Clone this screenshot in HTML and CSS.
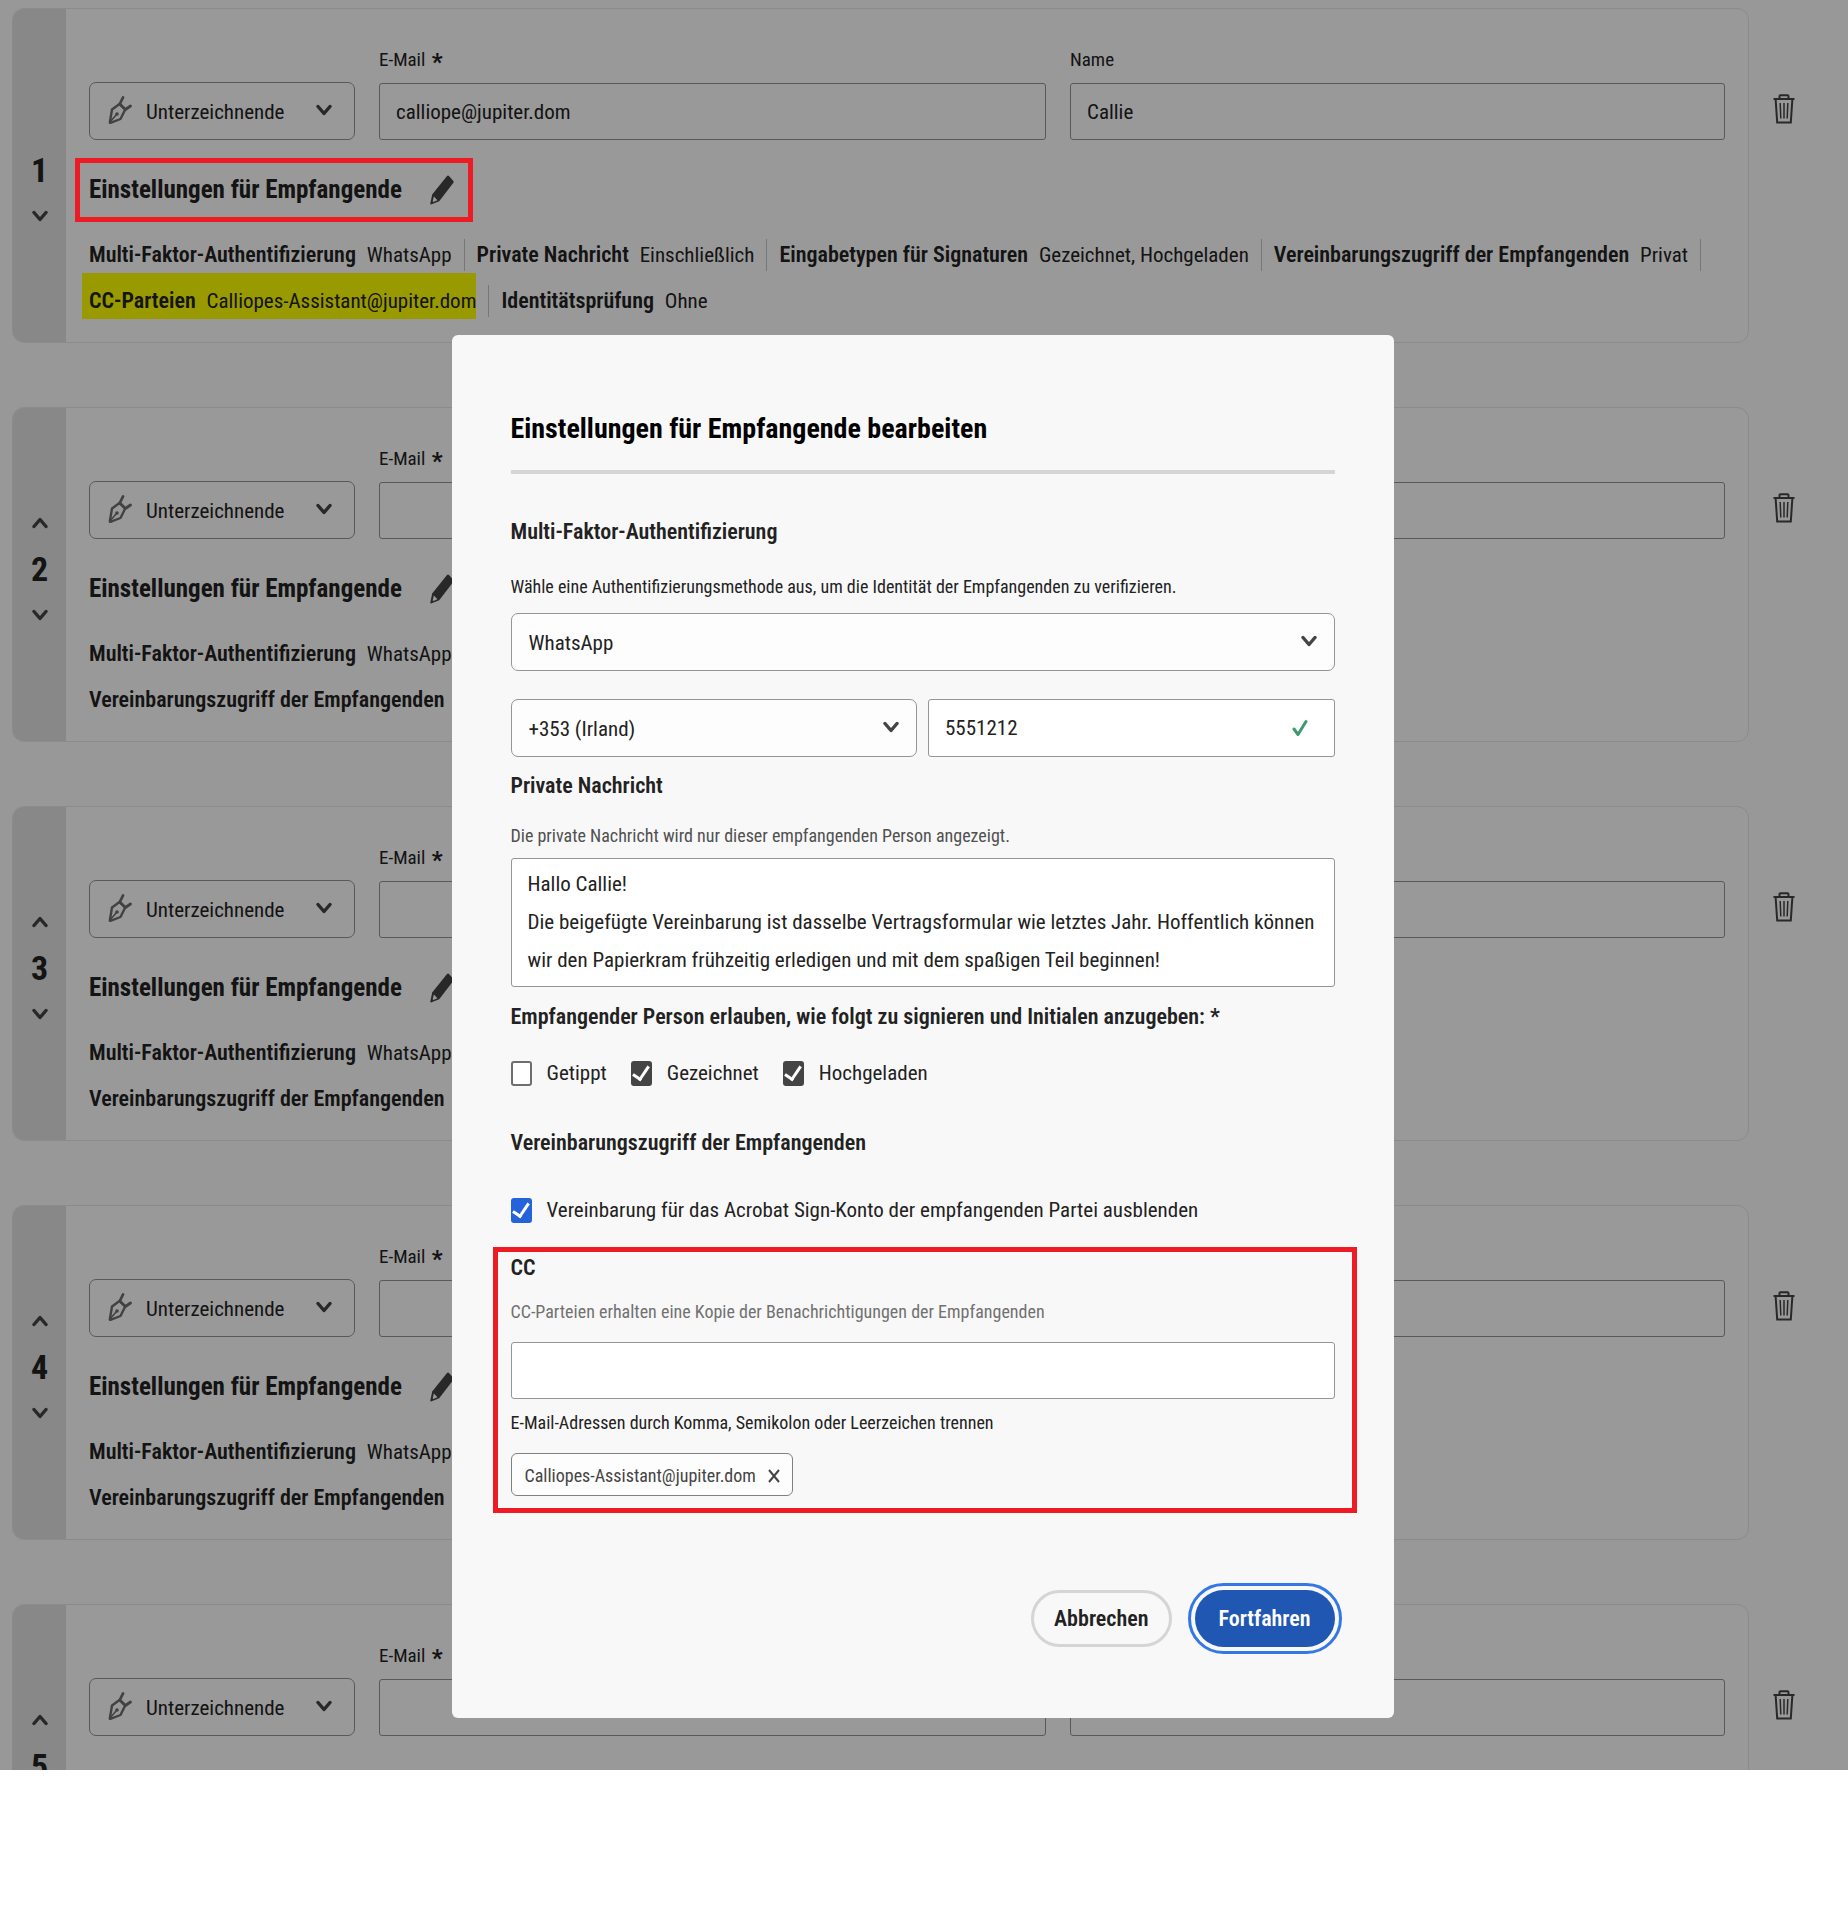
FILE: index.html
```
<!DOCTYPE html>
<html lang="de">
<head>
<meta charset="utf-8">
<meta name="viewport" content="width=device-width, initial-scale=1">
<title>Einstellungen für Empfangende bearbeiten</title>
<link rel="stylesheet" href="styles.css">
</head>
<body>

<svg class="sprite" aria-hidden="true">
  <symbol id="chevron" viewBox="0 0 16 12">
    <path d="M2 2.5 L8 9.5 L14 2.5" fill="none" stroke="currentColor" stroke-width="3.4" stroke-linecap="round" stroke-linejoin="round"/>
  </symbol>
  <symbol id="nib" viewBox="0 0 24 28">
    <path d="M11.5 8 L4 13.5 L1.8 26.5 Q1.8 27 2.4 26.8 L12.5 23 L17.2 13.5 Z" fill="none" stroke="currentColor" stroke-width="2.4" stroke-linejoin="round"/>
    <path d="M15 1.5 L11.8 8 L17.4 13.5 L22.5 10" fill="none" stroke="currentColor" stroke-width="2.8" stroke-linecap="round" stroke-linejoin="round"/>
    <path d="M2 26 L8.5 18.5" stroke="currentColor" stroke-width="1.6"/>
    <circle cx="9" cy="18" r="1.8" fill="currentColor"/>
  </symbol>
  <symbol id="pencil" viewBox="0 0 24 30">
    <path d="M17 0.9 Q18 0 19 0.9 L23.4 6 Q24 6.9 23.4 7.8 L9.2 26.2 L1 29.6 Q0.2 29.6 0.3 28.6 L2.2 19.4 Z" fill="currentColor"/>
    <path class="pencil-tip" d="M3.9 21.4 L7.4 25.2 L3.4 27 L2.7 26.3 Z"/>
  </symbol>
  <symbol id="trash" viewBox="0 0 22 30">
    <path d="M0.5 5 H21.5 M6.5 4.5 V2.2 Q6.5 1.2 7.5 1.2 H14.5 Q15.5 1.2 15.5 2.2 V4.5 M2.6 5 L4.2 28.6 H17.8 L19.4 5" fill="none" stroke="currentColor" stroke-width="2"/>
    <path d="M7.2 9 L7.8 24.5 M11 9 V24.5 M14.8 9 L14.2 24.5" fill="none" stroke="currentColor" stroke-width="1.5"/>
  </symbol>
  <symbol id="check" viewBox="0 0 16 18">
    <path d="M2 10 L6 15.5 L14 2.5" fill="none" stroke="currentColor" stroke-width="3" stroke-linecap="round" stroke-linejoin="round"/>
  </symbol>
</svg>

<div class="screen">
  <main class="recipients">

    <div class="recipient">
      <section class="card">
        <div class="order">
          <span class="order-number">1</span>
          <button class="move down" aria-label="Nach unten"><svg><use href="#chevron"/></svg></button>
        </div>
        <div class="card-body">
          <div class="fields">
            <div class="picker role">
              <svg class="nib"><use href="#nib"/></svg>
              <select aria-label="Rolle"><option>Unterzeichnende</option></select>
              <svg class="chevron"><use href="#chevron"/></svg>
            </div>
            <div class="field">
              <label for="email1">E-Mail <b>*</b></label>
              <input type="text" id="email1" value="calliope@jupiter.dom">
            </div>
            <div class="field">
              <label for="name1">Name</label>
              <input type="text" id="name1" value="Callie">
            </div>
          </div>
          <div class="settings marked">
            <h2>Einstellungen für Empfangende</h2>
            <button class="edit" aria-label="Bearbeiten"><svg><use href="#pencil"/></svg></button>
          </div>
          <div class="summary">
            <p><span><b>Multi-Faktor-Authentifizierung</b> WhatsApp</span></p>
            <p><span><b>Private Nachricht</b> Einschließlich</span></p>
            <p><span><b>Eingabetypen für Signaturen</b> Gezeichnet, Hochgeladen</span></p>
            <p><span><b>Vereinbarungszugriff der Empfangenden</b> Privat</span></p>
            <p><span class="highlight"><b>CC-Parteien</b> Calliopes-Assistant@jupiter.dom</span></p>
            <p><span><b>Identitätsprüfung</b> Ohne</span></p>
          </div>
        </div>
      </section>
      <button class="delete" aria-label="Löschen"><svg><use href="#trash"/></svg></button>
    </div>

    <div class="recipient">
      <section class="card">
        <div class="order">
          <button class="move up" aria-label="Nach oben"><svg><use href="#chevron"/></svg></button>
          <span class="order-number">2</span>
          <button class="move down" aria-label="Nach unten"><svg><use href="#chevron"/></svg></button>
        </div>
        <div class="card-body">
          <div class="fields">
            <div class="picker role">
              <svg class="nib"><use href="#nib"/></svg>
              <select aria-label="Rolle"><option>Unterzeichnende</option></select>
              <svg class="chevron"><use href="#chevron"/></svg>
            </div>
            <div class="field">
              <label for="email2">E-Mail <b>*</b></label>
              <input type="text" id="email2">
            </div>
            <div class="field">
              <input type="text" aria-label="Name">
            </div>
          </div>
          <div class="settings">
            <h2>Einstellungen für Empfangende</h2>
            <button class="edit" aria-label="Bearbeiten"><svg><use href="#pencil"/></svg></button>
          </div>
          <div class="summary stacked">
            <p><span><b>Multi-Faktor-Authentifizierung</b> WhatsApp</span></p>
            <p><span><b>Vereinbarungszugriff der Empfangenden</b></span></p>
          </div>
        </div>
      </section>
      <button class="delete" aria-label="Löschen"><svg><use href="#trash"/></svg></button>
    </div>

    <div class="recipient">
      <section class="card">
        <div class="order">
          <button class="move up" aria-label="Nach oben"><svg><use href="#chevron"/></svg></button>
          <span class="order-number">3</span>
          <button class="move down" aria-label="Nach unten"><svg><use href="#chevron"/></svg></button>
        </div>
        <div class="card-body">
          <div class="fields">
            <div class="picker role">
              <svg class="nib"><use href="#nib"/></svg>
              <select aria-label="Rolle"><option>Unterzeichnende</option></select>
              <svg class="chevron"><use href="#chevron"/></svg>
            </div>
            <div class="field">
              <label for="email3">E-Mail <b>*</b></label>
              <input type="text" id="email3">
            </div>
            <div class="field">
              <input type="text" aria-label="Name">
            </div>
          </div>
          <div class="settings">
            <h2>Einstellungen für Empfangende</h2>
            <button class="edit" aria-label="Bearbeiten"><svg><use href="#pencil"/></svg></button>
          </div>
          <div class="summary stacked">
            <p><span><b>Multi-Faktor-Authentifizierung</b> WhatsApp</span></p>
            <p><span><b>Vereinbarungszugriff der Empfangenden</b></span></p>
          </div>
        </div>
      </section>
      <button class="delete" aria-label="Löschen"><svg><use href="#trash"/></svg></button>
    </div>

    <div class="recipient">
      <section class="card">
        <div class="order">
          <button class="move up" aria-label="Nach oben"><svg><use href="#chevron"/></svg></button>
          <span class="order-number">4</span>
          <button class="move down" aria-label="Nach unten"><svg><use href="#chevron"/></svg></button>
        </div>
        <div class="card-body">
          <div class="fields">
            <div class="picker role">
              <svg class="nib"><use href="#nib"/></svg>
              <select aria-label="Rolle"><option>Unterzeichnende</option></select>
              <svg class="chevron"><use href="#chevron"/></svg>
            </div>
            <div class="field">
              <label for="email4">E-Mail <b>*</b></label>
              <input type="text" id="email4">
            </div>
            <div class="field">
              <input type="text" aria-label="Name">
            </div>
          </div>
          <div class="settings">
            <h2>Einstellungen für Empfangende</h2>
            <button class="edit" aria-label="Bearbeiten"><svg><use href="#pencil"/></svg></button>
          </div>
          <div class="summary stacked">
            <p><span><b>Multi-Faktor-Authentifizierung</b> WhatsApp</span></p>
            <p><span><b>Vereinbarungszugriff der Empfangenden</b></span></p>
          </div>
        </div>
      </section>
      <button class="delete" aria-label="Löschen"><svg><use href="#trash"/></svg></button>
    </div>

    <div class="recipient">
      <section class="card">
        <div class="order">
          <button class="move up" aria-label="Nach oben"><svg><use href="#chevron"/></svg></button>
          <span class="order-number">5</span>
          <button class="move down" aria-label="Nach unten"><svg><use href="#chevron"/></svg></button>
        </div>
        <div class="card-body">
          <div class="fields">
            <div class="picker role">
              <svg class="nib"><use href="#nib"/></svg>
              <select aria-label="Rolle"><option>Unterzeichnende</option></select>
              <svg class="chevron"><use href="#chevron"/></svg>
            </div>
            <div class="field">
              <label for="email5">E-Mail <b>*</b></label>
              <input type="text" id="email5">
            </div>
            <div class="field">
              <input type="text" aria-label="Name">
            </div>
          </div>
        </div>
      </section>
      <button class="delete" aria-label="Löschen"><svg><use href="#trash"/></svg></button>
    </div>

  </main>

  <div class="backdrop">
    <div class="modal" role="dialog" aria-labelledby="modal-title">
      <h1 id="modal-title">Einstellungen für Empfangende bearbeiten</h1>

      <h3 class="first">Multi-Faktor-Authentifizierung</h3>
      <label class="hint mfa-hint" for="method">Wähle eine Authentifizierungsmethode aus, um die Identität der Empfangenden zu verifizieren.</label>
      <div class="picker">
        <select id="method"><option>WhatsApp</option></select>
        <svg class="chevron"><use href="#chevron"/></svg>
      </div>
      <div class="phone">
        <div class="picker">
          <select aria-label="Landesvorwahl"><option>+353 (Irland)</option></select>
          <svg class="chevron"><use href="#chevron"/></svg>
        </div>
        <div class="phone-number">
          <input type="tel" value="5551212" aria-label="Telefonnummer">
          <svg class="valid"><use href="#check"/></svg>
        </div>
      </div>

      <h3 class="message-title">Private Nachricht</h3>
      <label class="hint soft" for="message">Die private Nachricht wird nur dieser empfangenden Person angezeigt.</label>
      <textarea id="message" rows="3">Hallo Callie!
Die beigefügte Vereinbarung ist dasselbe Vertragsformular wie letztes Jahr. Hoffentlich können wir den Papierkram frühzeitig erledigen und mit dem spaßigen Teil beginnen!</textarea>

      <h3 class="sign-title">Empfangender Person erlauben, wie folgt zu signieren und Initialen anzugeben: *</h3>
      <div class="checks">
        <label><input type="checkbox">Getippt</label>
        <label><input type="checkbox" checked>Gezeichnet</label>
        <label><input type="checkbox" checked>Hochgeladen</label>
      </div>

      <h3 class="access-title">Vereinbarungszugriff der Empfangenden</h3>
      <div class="checks access">
        <label><input type="checkbox" class="blue" checked>Vereinbarung für das Acrobat Sign-Konto der empfangenden Partei ausblenden</label>
      </div>

      <div class="cc">
        <h3>CC</h3>
        <label class="hint faint" for="cc">CC-Parteien erhalten eine Kopie der Benachrichtigungen der Empfangenden</label>
        <input type="text" id="cc">
        <p class="hint">E-Mail-Adressen durch Komma, Semikolon oder Leerzeichen trennen</p>
        <span class="chip">Calliopes-Assistant@jupiter.dom
          <button aria-label="Entfernen"><svg viewBox="0 0 12 14"><path d="M1 1 L11 13 M11 1 L1 13" stroke="currentColor" stroke-width="2"/></svg></button>
        </span>
      </div>

      <div class="actions">
        <button class="cancel">Abbrechen</button>
        <button class="continue">Fortfahren</button>
      </div>
    </div>
  </div>
</div>

</body>
</html>
```
FILE: styles.css
```
* {
    box-sizing: border-box;
}

body {
    margin: 0;
    background-color: #fff;
    color: #222;
    font-family: "Roboto Condensed", Roboto, "Liberation Sans", sans-serif;
    font-size: 21px;
    line-height: 28px;
}

h1, h2, h3, p {
    margin: 0;
}

button, input, select, textarea {
    font: inherit;
    color: inherit;
    margin: 0;
}

button {
    border: none;
    background: none;
    padding: 0;
    cursor: pointer;
}

svg {
    display: block;
}

.sprite {
    position: absolute;
    width: 0;
    height: 0;
}

/* list and dialog share one grid cell, the dialog sets the height */
.screen {
    display: grid;
    grid-template-columns: 1fr;
    background-color: #fdfdfd;
}

.recipients {
    grid-area: 1 / 1;
    contain: size;
    overflow: hidden;
    padding: 8px 0 0 12px;
    display: flex;
    flex-direction: column;
    gap: 64px;
}

.backdrop {
    grid-area: 1 / 1;
    z-index: 1;
    background-color: rgba(0, 0, 0, 0.4);
    padding: 335px 3px 52px 0;
    display: flex;
    justify-content: center;
    align-items: flex-start;
}

/* recipient cards */
.recipient {
    display: flex;
    align-items: flex-start;
    flex-shrink: 0;
}

.card {
    flex: 1;
    min-width: 0;
    min-height: 335px;
    display: flex;
    border: 1px solid #e8e8e8;
    border-radius: 12px;
    background-color: #fff;
}

.order {
    width: 53px;
    flex-shrink: 0;
    padding-bottom: 12px;
    border-radius: 11px 0 0 11px;
    background-color: #e3e3e3;
    display: flex;
    flex-direction: column;
    align-items: center;
    justify-content: center;
    gap: 22px;
}

.order-number {
    font-size: 34px;
    line-height: 36px;
    font-weight: 700;
}

.move svg {
    width: 16px;
    height: 12px;
    color: #444;
}

.up svg {
    transform: rotate(180deg);
}

.order .down:nth-child(2) {
    margin-bottom: -34px;
}

.card-body {
    flex: 1;
    padding: 39px 23px 16px;
}

.fields {
    display: grid;
    grid-template-columns: 266px 667fr 655fr;
    gap: 24px;
    align-items: end;
}

.field label {
    display: block;
    font-size: 19px;
    line-height: 24px;
    margin-bottom: 11px;
}

.field b {
    margin-left: 2px;
    font-size: 24px;
    line-height: 20px;
    vertical-align: -4px;
}

input[type="text"], input[type="tel"] {
    display: block;
    width: 100%;
    height: 57px;
    padding: 0 16px;
    border: 1px solid #959595;
    border-radius: 3px;
    background-color: #fff;
}

.picker {
    position: relative;
}

.picker select {
    appearance: none;
    display: block;
    width: 100%;
    height: 58px;
    padding: 2px 40px 0 17px;
    border: 1px solid #959595;
    border-radius: 7px;
    background-color: #fdfdfd;
}

.picker.role select {
    padding-left: 56px;
    background-color: #fff;
}

.chevron {
    position: absolute;
    right: 18px;
    top: 22px;
    width: 16px;
    height: 12px;
    color: #444;
    pointer-events: none;
}

.role .chevron {
    right: 23px;
}

.nib {
    position: absolute;
    left: 19px;
    top: 14px;
    width: 24px;
    height: 28px;
    color: #6e6e6e;
}

.settings {
    position: relative;
    width: fit-content;
    margin-top: 35px;
    display: flex;
    align-items: center;
    gap: 28px;
}

.settings h2 {
    font-size: 25px;
    line-height: 30px;
}

.edit svg {
    width: 24px;
    height: 30px;
    color: #444;
}

.pencil-tip {
    fill: #fff;
}

/* red marker stays above the backdrop */
.marked::after {
    content: "";
    position: absolute;
    inset: -17px -19px -17px -14px;
    z-index: 2;
    border: 5px solid #ed1c24;
    pointer-events: none;
}

.summary {
    margin-top: 27px;
    display: flex;
    flex-wrap: wrap;
}

.summary p {
    height: 46px;
    display: flex;
    align-items: center;
}

.summary p::after {
    content: "";
    width: 1px;
    height: 32px;
    margin: 0 12px;
    background-color: #c6c6c6;
}

.summary p:last-child::after {
    display: none;
}

.summary b {
    margin-right: 6px;
}

.summary b, h3 {
    font-size: 22px;
    font-weight: 600;
}

.summary.stacked {
    flex-direction: column;
}

.highlight {
    margin: -10px 0 0 -7px;
    padding: 14px 0 4px 7px;
    background-color: #ff0;
}

.delete {
    margin: 86px 53px 0 24px;
}

.delete svg {
    width: 22px;
    height: 30px;
    color: #444;
}

/* dialog */
.modal {
    width: 100%;
    max-width: 942px;
    padding: 78px 59px 71px;
    border-radius: 6px;
    background-color: #f8f8f8;
}

h1 {
    font-size: 28px;
    line-height: 32px;
    color: #000;
    padding-bottom: 25px;
    border-bottom: 4px solid #d5d5d5;
}

h3 {
    line-height: 28px;
}

.first {
    margin-top: 44px;
}

.hint {
    display: block;
    font-size: 18px;
    line-height: 24px;
}

.mfa-hint {
    margin: 29px 0 14px;
}

.phone {
    margin-top: 28px;
    display: grid;
    grid-template-columns: 1fr 1fr;
    gap: 11px;
}

.phone-number {
    position: relative;
}

.phone-number input {
    height: 58px;
}

.valid {
    position: absolute;
    right: 27px;
    top: 20px;
    width: 16px;
    height: 18px;
    color: #3f9b6d;
}

.message-title {
    margin-top: 15px;
}

.soft {
    margin: 24px 0 10px;
    color: #505050;
}

textarea {
    display: block;
    width: 100%;
    padding: 6px 16px 7px;
    border: 1px solid #959595;
    border-radius: 3px;
    background-color: #fff;
    line-height: 38px;
    resize: none;
}

.sign-title {
    margin-top: 16px;
}

.checks {
    margin-top: 28px;
    display: flex;
    gap: 24px;
}

.checks label {
    display: flex;
    align-items: center;
    gap: 15px;
}

.checks input {
    appearance: none;
    width: 21px;
    height: 25px;
    border: 2px solid #6e6e6e;
    border-radius: 3px;
    background-color: #fff;
}

.checks input:checked {
    display: grid;
    place-items: center;
    border-color: #444;
    background-color: #444;
}

.checks input:checked::before {
    content: "";
    width: 7px;
    height: 14px;
    margin-top: -4px;
    border: solid #fff;
    border-width: 0 3px 3px 0;
    transform: rotate(34deg);
}

.checks input.blue {
    border-color: #2463d9;
    background-color: #2463d9;
}

.access-title {
    margin-top: 42px;
}

.access {
    margin-top: 39px;
}

.cc {
    margin: 23px -22px 0 -18px;
    padding: 2px 17px 12px 13px;
    border: 5px solid #ed1c24;
}

.faint {
    margin: 18px 0;
    color: #717171;
}

.cc p {
    margin: 12px 0 18px;
}

.chip {
    width: fit-content;
    height: 43px;
    padding: 2px 12px 0 13px;
    border: 1px solid #808080;
    border-radius: 6px;
    background-color: #fdfdfd;
    color: #444;
    font-size: 18px;
    display: flex;
    align-items: center;
    gap: 12px;
}

.chip svg {
    width: 12px;
    height: 14px;
}

.actions {
    margin-top: 77px;
    display: flex;
    justify-content: flex-end;
    gap: 23px;
}

.actions button {
    height: 57px;
    min-width: 140px;
    padding: 0 20px;
    border-radius: 29px;
    font-size: 22px;
    font-weight: 600;
}

.actions .cancel {
    border: 3px solid #d5d5d5;
}

.actions .continue {
    background-color: #1f57b3;
    color: #fff;
    outline: 3px solid #3478e5;
    outline-offset: 4px;
}
```
